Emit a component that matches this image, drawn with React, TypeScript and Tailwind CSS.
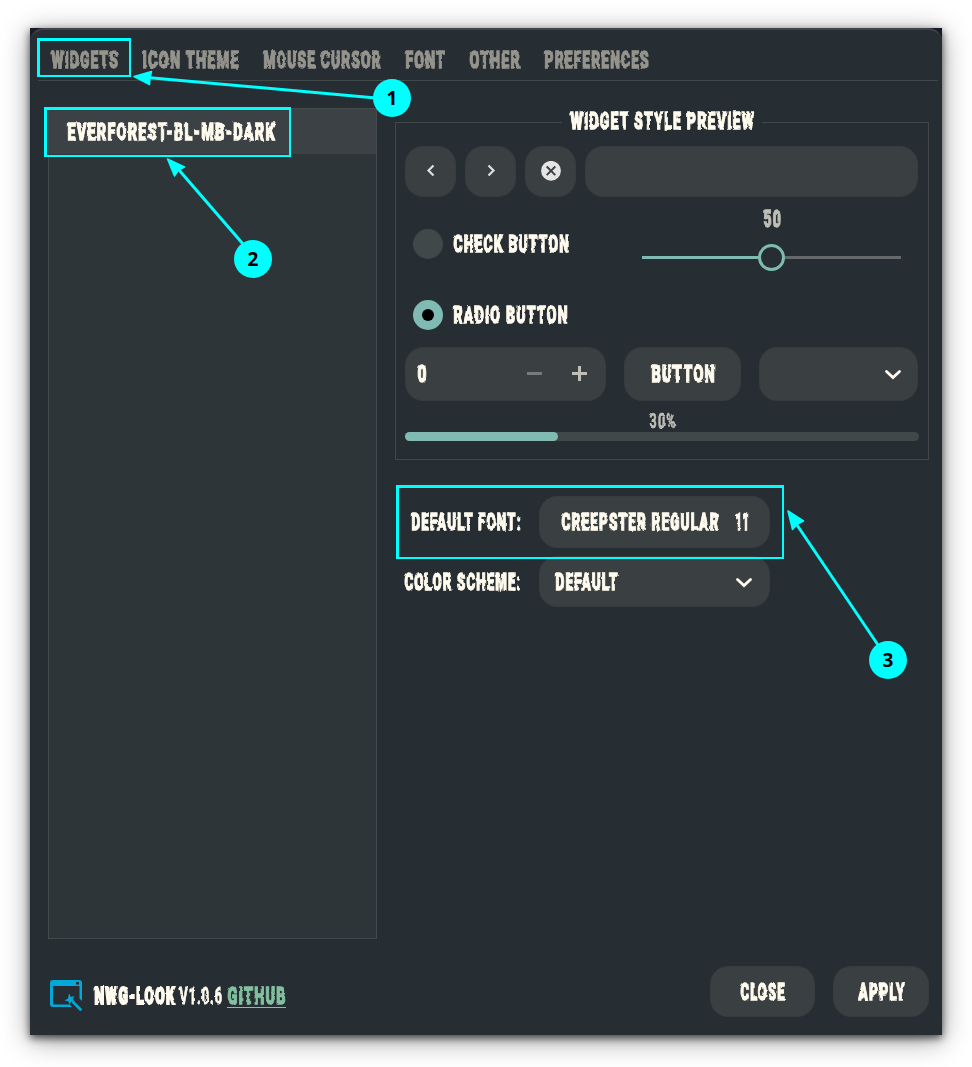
import { useLayoutEffect, useRef, type ReactNode } from "react";

/* Condensed display lettering squeezed to a given width. */
function Label({
  w,
  size = "text-[23.5px]",
  weight = "font-black [-webkit-text-stroke:1.3px_currentColor]",
  className = "",
  children,
}: {
  w: number;
  size?: string;
  weight?: string;
  className?: string;
  children: ReactNode;
}) {
  const ref = useRef<HTMLSpanElement>(null);
  useLayoutEffect(() => {
    const el = ref.current;
    if (el) el.style.transform = `translate(0.5px, -0.2px) scaleX(${(w - 0.8) / (el.offsetWidth - 2)})`;
  }, [w]);
  return (
    <span
      className={`block h-[18px] shrink-0 whitespace-nowrap font-['Roboto',sans-serif] leading-[18px] tracking-[2px] ${size} ${weight} ${className}`}
      style={{ width: w, filter: "url(#rough)" }}
    >
      <span ref={ref} className="inline-block origin-left">
        {children}
      </span>
    </span>
  );
}

const tabs: [string, number][] = [
  ["WIDGETS", 67],
  ["ICON THEME", 97],
  ["MOUSE CURSOR", 118],
  ["FONT", 40],
  ["OTHER", 51],
  ["PREFERENCES", 105],
];

const btn = "flex shrink-0 items-center rounded-[18px] border border-[#363c40] bg-[#3a3f42]";

function Chevron() {
  return (
    <svg width="18" height="12" viewBox="0 0 18 12" fill="none" className="mt-[2px]">
      <path d="M2.500 2.500L9 8.500L15.500 2.500" stroke="#fffbef" strokeWidth="2.800" strokeLinecap="round" />
    </svg>
  );
}

function Badge({ n, className }: { n: number; className: string }) {
  return (
    <div
      className={`absolute flex size-[38px] items-center justify-center rounded-full bg-[#00ffff] font-['Open_Sans',sans-serif] text-[19px] font-bold text-black ${className}`}
    >
      {n}
    </div>
  );
}

export default function App() {
  return (
    <div className="relative h-[1067px] w-[972px] overflow-hidden bg-white pt-[28px] pl-[30px]">
      <svg width="0" height="0" className="absolute">
        <filter id="rough" x="-5%" y="-20%" width="110%" height="140%" colorInterpolationFilters="sRGB">
          <feTurbulence type="fractalNoise" baseFrequency="0.16" numOctaves="2" seed="4" result="n" />
          <feDisplacementMap in="SourceGraphic" in2="n" scale="2.8" xChannelSelector="R" yChannelSelector="G" />
        </filter>
      </svg>

      <main className="h-[1007px] w-[912px] bg-[#1b1a29] text-[#fffbef] shadow-[0_3px_8px_rgba(0,0,0,0.65),0_5px_26px_rgba(0,0,0,0.4)]">
        <div className="flex h-full flex-col rounded-t-[14px] border-t-2 border-[#3f4447] bg-[#272e33]">
          <nav className="mr-[4px] ml-[8px] flex h-[51px] shrink-0 items-start gap-[24px] border-b border-[#414849] pt-[21px] pl-[13px] text-[#95948d]">
            {tabs.map(([t, w]) => (
              <Label key={t} w={w}>
                {t}
              </Label>
            ))}
          </nav>

          <div className="flex pt-[27px] pl-[18px]">
            <aside className="h-[831px] w-[329px] shrink-0 border border-[#414b4b] bg-[#2e3538]">
              <div className="flex h-[45px] items-center bg-[#3b4144] pl-[18px]">
                <Label w={208}>EVERFOREST-BL-MB-DARK</Label>
              </div>
            </aside>

            <section className="ml-[18px] w-[534px]">
              <div className="mt-[4px] flex h-[18px] items-center">
                <div className="mt-[11px] h-[9px] w-[167px] border-t border-l border-[#414849]" />
                <div className="flex flex-1 justify-center">
                  <Label w={184}>WIDGET STYLE PREVIEW</Label>
                </div>
                <div className="mt-[11px] h-[9px] w-[167px] border-t border-r border-[#414849]" />
              </div>
              <div className="h-[330px] border border-t-0 border-[#414849] px-[9px] pt-[15.5px]">
                <div className="flex gap-[9px]">
                  <div className={`${btn} size-[51px] justify-center`}>
                    <svg width="10" height="14" viewBox="0 0 10 14" fill="none" stroke="#dedede" strokeWidth="2.200">
                      <path d="M7.500 1.500L2.500 6.500L7.500 11.500" />
                    </svg>
                  </div>
                  <div className={`${btn} size-[51px] justify-center`}>
                    <svg width="10" height="14" viewBox="0 0 10 14" fill="none" stroke="#dedede" strokeWidth="2.200">
                      <path d="M2.500 1.500L7.500 6.500L2.500 11.500" />
                    </svg>
                  </div>
                  <div className={`${btn} size-[51px] justify-center`}>
                    <svg width="20" height="20" viewBox="0 0 20 20">
                      <circle cx="10" cy="9.800" r="9.900" fill="#e4e4e4" />
                      <path d="M5.700 5.500L14.300 14.100M14.300 5.500L5.700 14.100" stroke="#3a3f42" strokeWidth="1.900" />
                    </svg>
                  </div>
                  <div className={`${btn} h-[51px] w-[333px]`} />
                </div>

                <div className="flex h-[150px]">
                  <div className="w-[237px] pl-[7.5px]">
                    <div className="mt-[32.5px] flex h-[30px] items-center gap-[10.5px]">
                      <div className="size-[30px] rounded-full bg-[#414849]" />
                      <Label w={116}>CHECK BUTTON</Label>
                    </div>
                    <div className="mt-[41px] flex h-[30px] items-center gap-[10.5px]">
                      <div className="flex size-[30px] items-center justify-center rounded-full bg-[#7fbbb3]">
                        <div className="size-[12px] rounded-full bg-black" />
                      </div>
                      <Label w={115}>RADIO BUTTON</Label>
                    </div>
                  </div>
                  <div className="flex w-[259px] flex-col items-center pt-[13.5px]">
                    <Label w={18} className="text-[#bfbeb7]">
                      50
                    </Label>
                    <div className="mt-[16px] flex h-[27px] w-full items-center">
                      <div className="h-[3px] flex-1 bg-[#7fbbb3]" />
                      <div className="size-[27px] rounded-full border-[3px] border-[#7fbbb3]" />
                      <div className="h-[3px] flex-1 bg-[#65696a]" />
                    </div>
                  </div>
                </div>

                <div className="flex gap-[18px]">
                  <div className={`${btn} h-[54px] w-[201px] pl-[11px]`}>
                    <Label w={10}>0</Label>
                    <svg width="70" height="20" viewBox="0 0 70 20" className="ml-[98px]">
                      <path d="M2 9.500H17" stroke="#777b7b" strokeWidth="3" />
                      <path d="M47 9.500H62M54.500 2V17" stroke="#bfbeb7" strokeWidth="3" />
                    </svg>
                  </div>
                  <div className={`${btn} h-[54px] w-[117px] justify-center`}>
                    <Label w={64}>BUTTON</Label>
                  </div>
                  <div className={`${btn} h-[54px] w-[159px] justify-end pr-[15px]`}>
                    <Chevron />
                  </div>
                </div>

                <div className="flex h-[31.5px] justify-center pt-[11px]">
                  <Label
                    w={27}
                    size="text-[20px]"
                    weight="font-bold [-webkit-text-stroke:0.7px_currentColor]"
                    className="text-[#bfbeb7]"
                  >
                    30%
                  </Label>
                </div>
                <div className="h-[9px] rounded-full bg-[#414849]">
                  <div className="h-full w-[153px] rounded-full bg-[#7fbbb3]" />
                </div>
              </div>

              <div className="mt-[36px] flex items-center">
                <div className="flex w-[126px] justify-end">
                  <Label w={110}>DEFAULT FONT:</Label>
                </div>
                <div className={`${btn} ml-[18px] h-[52px] w-[231px] justify-center gap-[16px]`}>
                  <Label w={158}>CREEPSTER REGULAR</Label>
                  <Label w={14}>11</Label>
                </div>
              </div>
              <div className="mt-[8px] flex items-center">
                <div className="flex w-[126px] justify-end">
                  <Label w={117}>COLOR SCHEME:</Label>
                </div>
                <div className={`${btn} ml-[18px] h-[51px] w-[231px] justify-between pr-[16px] pl-[15px]`}>
                  <Label w={63}>DEFAULT</Label>
                  <Chevron />
                </div>
              </div>
            </section>
          </div>

          <footer className="flex pt-[27px] pr-[13px] pl-[20px]">
            <svg width="34" height="34" viewBox="0 0 34 34" className="mt-[13px]">
              <path
                fillRule="evenodd"
                fill="#04a8d8"
                d="M3 1H29Q32 1 32 4V22L29.500 19.500V7H3V25.500H20L22 28H3Q0 28 0 25V4Q0 1 3 1ZM26 3V5.500H29V3Z"
              />
              <path
                d="M19 14.500L21 18L24.500 17L22.800 20.300L25 23L21.200 22.600L19.500 25.500L18.300 22.300L14.500 21.500L18 19.500Z"
                fill="#04a8d8"
              />
              <path d="M23.500 23.500L30.500 30.500" stroke="#04a8d8" strokeWidth="2.800" strokeLinecap="round" />
            </svg>
            <div className="mt-[20.5px] ml-[10px] flex">
              <Label w={81} weight="font-black [-webkit-text-stroke:2px_currentColor]">
                NWG-LOOK
              </Label>
              <Label w={43} weight="font-bold [-webkit-text-stroke:1px_currentColor]" className="ml-[4px]">
                V1.0.6
              </Label>
              <a className="ml-[4.5px] h-[21px] border-b border-[#83c0a0] text-[#83c0a0]">
                <Label w={59}>GITHUB</Label>
              </a>
            </div>
            <div className={`${btn} ml-auto h-[51px] w-[105px] justify-center`}>
              <Label w={45}>CLOSE</Label>
            </div>
            <div className={`${btn} ml-[18px] h-[51px] w-[96px] justify-center`}>
              <Label w={47}>APPLY</Label>
            </div>
          </footer>
        </div>
      </main>

      <div className="absolute top-[38px] left-[37px] h-[39px] w-[94px] border-2 border-t-3 border-l-3 border-[#00ffff]" />
      <div className="absolute top-[107px] left-[44px] h-[50px] w-[247px] border-2 border-t-3 border-l-3 border-[#00ffff]" />
      <div className="absolute top-[485px] left-[396px] h-[74px] w-[388px] border-2 border-t-3 border-l-3 border-[#00ffff]" />
      <svg width="972" height="1067" viewBox="0 0 972 1067" className="pointer-events-none absolute top-0 left-0">
        <g stroke="#00ffff" strokeWidth="3">
          <path d="M150 77.800L376 98" />
          <path d="M179 170L243 244" />
          <path d="M797 525L878 645" />
        </g>
        <g fill="#00ffff" stroke="#00ffff" strokeWidth="1.500" strokeLinejoin="round">
          <path d="M134 76.500L151.500 71.500L150 78L149.500 84.500Z" />
          <path d="M167.500 159L184.500 167L178.500 170L174.500 176Z" />
          <path d="M788 511L803.500 521L797.500 524L792.500 529.500Z" />
        </g>
      </svg>
      <Badge n={1} className="top-[79px] left-[373px]" />
      <Badge n={2} className="top-[240px] left-[234px]" />
      <Badge n={3} className="top-[641px] left-[869px]" />
    </div>
  );
}
